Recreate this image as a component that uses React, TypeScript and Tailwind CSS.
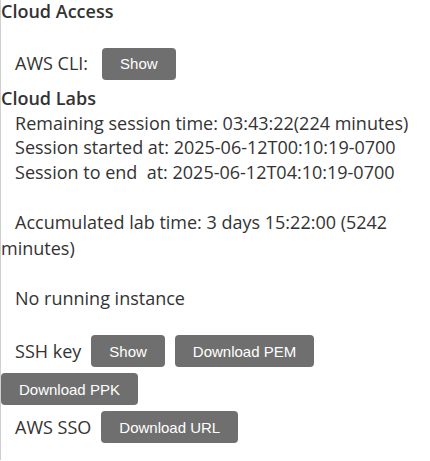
import React from 'react';

const btn =
  "inline-flex items-center justify-center h-[32px] px-[18px] rounded-[4px] bg-[#6f6f6f] text-white text-[15px] font-['Liberation_Sans',Arial,sans-serif] leading-none";

const sp = '\u00a0\u00a0\u00a0';

export default function App() {
  return (
    <div className="min-h-[461px] w-[430px] bg-white">
      <div className="border-l-[1px] border-[#cfcfcf] min-h-[461px] pr-[1px] text-[18px] text-[#333333] font-['Open_Sans','Noto_Sans',sans-serif] leading-[24.5px]">
        <div className="font-semibold -mt-[1px]">Cloud Access</div>

        <div className="mt-[24.5px] flex items-center h-[31px]">
          <span className="font-medium">{sp}AWS CLI:</span>
          <button className={btn + ' ml-[14px] h-[31px]'}>Show</button>
        </div>

        <div className="mt-[7px] font-semibold">Cloud Labs</div>
        <div>{sp}Remaining session time: 03:43:22(224 minutes)</div>
        <div>{sp}Session started at: 2025-06-12T00:10:19-0700</div>
        <div className="whitespace-pre">{sp}Session to end  at: 2025-06-12T04:10:19-0700</div>
        <div className="h-[26px]" />
        <div className="leading-[25.5px]">{sp}Accumulated lab time: 3 days 15:22:00 (5242 minutes)</div>
        <div className="h-[24.5px]" />
        <div>{sp}No running instance</div>

        <div className="mt-[25px] flex flex-wrap items-center gap-x-[10px] gap-y-[6px]">
          <span>{sp}SSH key</span>
          <button className={btn}>Show</button>
          <button className={btn}>Download PEM</button>
          <button className={btn}>Download PPK</button>
        </div>

        <div className="mt-[6px] flex items-center">
          <span>{sp}AWS SSO</span>
          <button className={btn + ' ml-[10px] h-[31px]'}>Download URL</button>
        </div>
      </div>
    </div>
  );
}
